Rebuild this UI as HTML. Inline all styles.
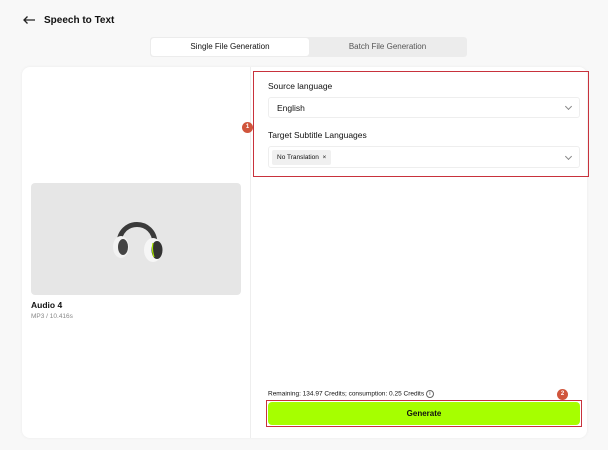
<!DOCTYPE html>
<html><head><style>
*{box-sizing:border-box;margin:0;padding:0}
body{width:608px;height:450px;background:#f8f8f8;font-family:"Liberation Sans",sans-serif;position:relative;overflow:hidden;color:#111}
.a{position:absolute}
.title{left:44px;top:15px;font-size:10px;font-weight:bold}
.tabs{left:150px;top:37px;width:317px;height:20px;background:#ececec;border-radius:3px}
.tab{top:1px;height:18px;font-size:8px;line-height:18px;text-align:center}
.card{left:22px;top:67px;width:565px;height:371px;background:#fff;border-radius:8px;box-shadow:0 0 3px rgba(0,0,0,0.06)}
.lbl{font-size:8.5px}
.sel{left:268px;width:312px;background:#fff;border:1px solid #eee;border-radius:3px;font-size:8.5px;padding-left:8px}
.chev{right:8px;top:6px;width:5px;height:5px;border-right:1px solid #888;border-bottom:1px solid #888;transform:rotate(45deg)}
.badge{width:11px;height:11px;border-radius:50%;background:#d0553c;color:#fff;font-size:6px;font-weight:bold;text-align:center;line-height:11px}
</style></head><body>
<svg class="a" style="left:22px;top:15px" width="14" height="10" viewBox="0 0 14 10"><path d="M13 5H2M5.5 1.5L2 5l3.5 3.5" stroke="#222" stroke-width="1.3" fill="none"/></svg>
<div class="a title">Speech to Text</div>
<div class="a tabs">
 <div class="a tab" style="left:1px;width:158px;background:#fff;border-radius:3px;color:#111">Single File Generation</div>
 <div class="a tab" style="left:159px;width:157px;color:#555">Batch File Generation</div>
</div>
<div class="a card"></div>
<div class="a" style="left:250px;top:67px;width:1px;height:371px;background:#eee"></div>
<div class="a" style="left:31px;top:183px;width:210px;height:112px;background:#e6e6e6;border-radius:4px"></div>
<svg class="a" style="left:108px;top:212px" width="58" height="52" viewBox="0 0 58 52">
 <path d="M11 32 C11 6 47 6 47 32" stroke="#3a3a3a" stroke-width="5" fill="none"/>
 <ellipse cx="13" cy="35" rx="8" ry="11" fill="#f2f2f2"/><ellipse cx="15" cy="35" rx="5" ry="8" fill="#444"/>
 <ellipse cx="45" cy="38" rx="9" ry="12" fill="#f6f6f6"/><ellipse cx="49" cy="38" rx="5.5" ry="9" fill="#333"/>
 <path d="M45 31 Q43.5 38 46 45" stroke="#a8e600" stroke-width="1.2" fill="none"/>
</svg>
<div class="a" style="left:31px;top:300px;font-size:8.5px;font-weight:bold">Audio 4</div>
<div class="a" style="left:31px;top:313px;font-size:6.5px;color:#888">MP3 / 10.416s</div>
<div class="a" style="left:253px;top:71px;width:336px;height:106px;border:1.5px solid #c8323c"></div>
<div class="a badge" style="left:242px;top:122px">1</div>
<div class="a lbl" style="left:268px;top:81px">Source language</div>
<div class="a sel" style="top:97px;height:21px;line-height:20px">English<div class="a chev"></div></div>
<div class="a lbl" style="left:268px;top:130px">Target Subtitle Languages</div>
<div class="a sel" style="top:146px;height:22px;padding-left:3px"><span style="display:inline-block;margin-top:3px;background:#f0f0f0;font-size:6.5px;padding:4px 5px;border-radius:2px">No Translation &nbsp;×</span><div class="a chev" style="top:7px"></div></div>
<div class="a" style="left:268px;top:390px;font-size:6.5px">Remaining: 134.97 Credits; consumption: 0.25 Credits <span style="display:inline-block;width:8px;height:8px;border:0.8px solid #666;border-radius:50%;font-size:5px;text-align:center;line-height:7px;vertical-align:middle">i</span></div>
<div class="a badge" style="left:557px;top:389px">2</div>
<div class="a" style="left:266px;top:400px;width:316px;height:27px;border:1.5px solid #c8323c"></div>
<div class="a" style="left:268px;top:402px;width:312px;height:23px;background:#a6ff00;border-radius:4px;text-align:center;line-height:23px;font-size:8px;font-weight:bold">Generate</div>
</body></html>
